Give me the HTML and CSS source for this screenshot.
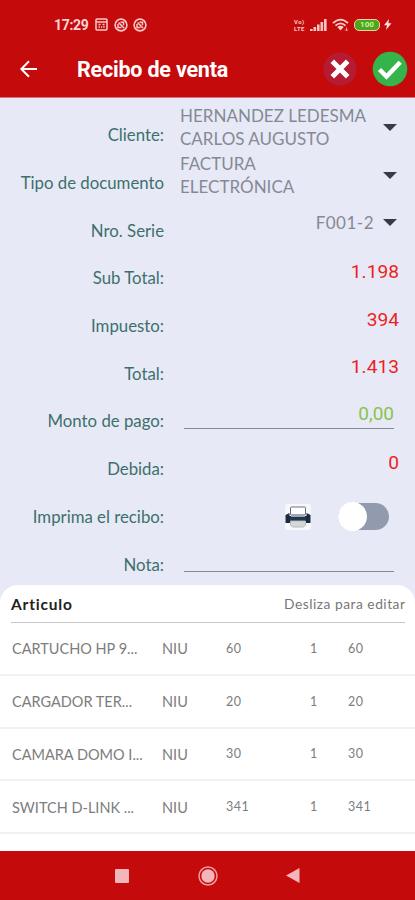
FILE: index.html
```html
<!DOCTYPE html>
<html lang="es">
<head>
<meta charset="UTF-8">
<meta name="viewport" content="width=device-width, initial-scale=1.0">
<title>Recibo de venta</title>
<link rel="stylesheet" href="styles.css">
</head>
<body>
<div class="app">
    <header class="cabecera">
        <div class="estado">
            <span class="hora">17:29</span>
            <svg class="ico-calendario" width="13" height="13" viewBox="0 0 13 13"><rect x="1" y="1" width="11" height="11" rx="1" fill="none" stroke="#f9c9c9" stroke-width="1.5"/><path d="M1 4h11M3.500 6.500h2M7.500 6.500h2M3.500 9h1.500M6 9h1.200M8.200 9h1.500" stroke="#f9c9c9" stroke-width="1.300"/></svg>
            <svg class="ico-aviso" width="14" height="14" viewBox="0 0 14 14"><circle cx="7" cy="7" r="5.900" fill="none" stroke="#f9c9c9" stroke-width="1.600"/><path d="M4.500 4.500l5.500 5.500M4 6v3.500h3.500M6.500 4.200h3v3" fill="none" stroke="#f9c9c9" stroke-width="1.500"/></svg>
            <svg class="ico-aviso" width="14" height="14" viewBox="0 0 14 14"><circle cx="7" cy="7" r="5.900" fill="none" stroke="#f9c9c9" stroke-width="1.600"/><path d="M4.500 4.500l5.500 5.500M4 6v3.500h3.500M6.500 4.200h3v3" fill="none" stroke="#f9c9c9" stroke-width="1.500"/></svg>
            <span class="lte"><span>Vo)</span><span>LTE</span></span>
            <svg class="ico-senal" width="17" height="12" viewBox="0 0 17 12"><path d="M0 12V10h2.600v2zM3.500 12V8h2.600v4zM7 12V5.500h2.600V12zM10.500 12V3h2.600v9zM14 12V0h2.600v12z" fill="#f8c4c4"/></svg>
            <svg class="ico-wifi" width="18" height="14" viewBox="0 0 18 14"><path d="M1 5.200Q8.500-2 16 5.200M3.500 7.700Q8.500 3 13.500 7.700" fill="none" stroke="#f9cccc" stroke-width="1.800"/><path d="M5.300 8.900Q8.500 6.500 11.700 8.900L8.500 12.500z" fill="#f9cccc"/><path d="M14.500 9.500v3.500M13 11.500l1.500 1.500 1.500-1.500" stroke="#f0a090" fill="none"/></svg>
            <span class="bateria">100</span>
            <svg class="ico-rayo" width="8" height="11" viewBox="0 0 8 11"><path d="M5 0L0 6.300h3L2 11l5.500-6.700H4.400z" fill="#fde0e0"/></svg>
        </div>
        <div class="barra">
            <svg class="volver" width="18" height="18" viewBox="0 0 18 18"><path d="M17 9H2M9 1.200L1.300 9 9 16.800" fill="none" stroke="#fff" stroke-width="2"/></svg>
            <h1 class="titulo">Recibo de venta</h1>
            <svg class="cancelar" width="34" height="34" viewBox="0 0 34 34"><circle cx="17" cy="17" r="16.500" fill="#b61b34"/><path d="M9.300 9.300l15.400 15.400M24.700 9.300L9.300 24.700" stroke="#fff" stroke-width="5"/></svg>
            <svg class="aceptar" width="36" height="36" viewBox="0 0 36 36"><circle cx="18" cy="18" r="17.300" fill="#34b44a"/><path d="M7.500 18.500l7 7L28.200 11.300" fill="none" stroke="#fff" stroke-width="4.500"/></svg>
        </div>
    </header>

    <main class="formulario">
        <div class="fila">
            <label class="etiqueta">Cliente:</label>
            <div class="selector"><span class="opcion">HERNANDEZ LEDESMA<br>CARLOS AUGUSTO</span><span class="flecha"></span></div>
        </div>
        <div class="fila">
            <label class="etiqueta">Tipo de documento</label>
            <div class="selector"><span class="opcion">FACTURA<br>ELECTRÓNICA</span><span class="flecha"></span></div>
        </div>
        <div class="fila">
            <label class="etiqueta">Nro. Serie</label>
            <div class="selector serie"><span class="opcion">F001-2</span><span class="flecha"></span></div>
        </div>
        <div class="fila">
            <label class="etiqueta">Sub Total:</label>
            <div class="importe">1.198</div>
        </div>
        <div class="fila">
            <label class="etiqueta">Impuesto:</label>
            <div class="importe">394</div>
        </div>
        <div class="fila">
            <label class="etiqueta">Total:</label>
            <div class="importe">1.413</div>
        </div>
        <div class="fila">
            <label class="etiqueta">Monto de pago:</label>
            <div class="campo">0,00</div>
        </div>
        <div class="fila">
            <label class="etiqueta">Debida:</label>
            <div class="importe">0</div>
        </div>
        <div class="fila">
            <label class="etiqueta">Imprima el recibo:</label>
            <div class="imprimir">
                <svg class="impresora" width="28" height="28" viewBox="0 0 28 28"><rect x="1" y="1" width="26" height="26" rx="3" fill="#f7f8fc"/><path d="M1.500 12l4-2v3h17v-3l4 2v8h-5v-2h-15v2h-5z" fill="#1d2b42"/><rect x="6.500" y="4" width="15" height="8" rx="1" fill="#fff" stroke="#6b747e"/><path d="M7 11h14v3H7z" fill="#9da7b5"/><path d="M6 14.500h16V17H6z" fill="#26384f"/><path d="M6.500 18h15v4l-2 2h-11l-2-2z" fill="#d5d8d9" stroke="#b5bcbf"/></svg>
                <span class="interruptor"></span>
            </div>
        </div>
        <div class="fila">
            <label class="etiqueta">Nota:</label>
            <div class="campo"></div>
        </div>
    </main>

    <section class="articulos">
        <div class="articulos-cabecera">
            <span class="articulos-titulo">Articulo</span>
            <span class="articulos-ayuda">Desliza para editar</span>
        </div>
        <div class="articulo"><span class="nombre">CARTUCHO HP 9...</span><span class="unidad">NIU</span><span>60</span><span>1</span><span>60</span></div>
        <div class="articulo"><span class="nombre">CARGADOR TER...</span><span class="unidad">NIU</span><span>20</span><span>1</span><span>20</span></div>
        <div class="articulo"><span class="nombre">CAMARA DOMO I...</span><span class="unidad">NIU</span><span>30</span><span>1</span><span>30</span></div>
        <div class="articulo"><span class="nombre">SWITCH D-LINK ...</span><span class="unidad">NIU</span><span>341</span><span>1</span><span>341</span></div>
    </section>

    <nav class="navegacion">
        <svg width="14" height="14" viewBox="0 0 14 14"><rect width="14" height="14" rx="1" fill="#f4b6bb"/></svg>
        <svg width="20" height="20" viewBox="0 0 20 20"><circle cx="10" cy="10" r="9" fill="none" stroke="#ee9da2" stroke-width="1.500"/><circle cx="10" cy="10" r="6.700" fill="#f4b6bb"/></svg>
        <svg width="14" height="15" viewBox="0 0 14 15"><path d="M13.500 0v15L0 7.500z" fill="#f4b6bb"/></svg>
    </nav>
</div>
</body>
</html>
```
FILE: styles.css
```css
* {
    box-sizing: border-box;
}

body {
    margin: 0;
    font-family: Lato, "Open Sans", sans-serif;
}

.app {
    width: 415px;
    height: 900px;
    display: flex;
    flex-direction: column;
    background-color: #e7eaf6;
    overflow: hidden;
}

/* Cabecera */
.cabecera {
    height: 98px;
    flex: none;
    background-color: #c50a0b;
    border-bottom: 1px solid #dc727a;
    color: #fff;
}

.estado {
    display: flex;
    align-items: center;
    height: 49px;
    padding-left: 54px;
}

.hora {
    width: 41px;
    font: bold 14px Roboto, sans-serif;
    letter-spacing: -0.3px;
    color: #fbd5d5;
}

.ico-aviso {
    margin-left: 5px;
}

.ico-calendario + .ico-aviso {
    margin-left: 6px;
}

.lte {
    display: flex;
    flex-direction: column;
    width: 16px;
    margin-left: 147px;
    font: bold 6px/7px Roboto, sans-serif;
    letter-spacing: 0.4px;
    color: #f9caca;
}

.ico-wifi {
    margin-left: 5px;
}

.bateria {
    width: 26px;
    height: 12px;
    margin-left: 4px;
    border: 1.5px solid #f5c5b5;
    border-radius: 5px;
    background-color: #4da817;
    font: bold 8px/9px Roboto, sans-serif;
    text-align: center;
    color: #c7f0a5;
}

.ico-rayo {
    margin-left: 4px;
}

.barra {
    display: flex;
    align-items: center;
    height: 40px;
    padding: 0 7px 0 20px;
}

.titulo {
    margin: 1px 0 0 39px;
    font: bold 21.5px Roboto, sans-serif;
    white-space: nowrap;
    letter-spacing: -0.2px;
}

.cancelar {
    margin-left: auto;
}

.aceptar {
    margin-left: 15px;
}

/* Formulario */
.formulario {
    height: 487px;
    flex: none;
    padding-top: 5px;
}

.fila {
    display: grid;
    grid-template-columns: 164px 1fr;
    height: 47.7px;
    align-items: center;
}

.etiqueta {
    padding-top: 16px;
    text-align: right;
    font-size: 16.8px;
    white-space: nowrap;
    color: #3d706c;
}

.selector {
    display: flex;
    align-items: center;
    justify-content: space-between;
    padding: 1px 18px 0 16px;
    font-size: 17px;
    line-height: 23px;
    color: #858995;
}

.serie {
    justify-content: flex-end;
    gap: 9px;
}

.serie .opcion {
    letter-spacing: 0.5px;
}

.flecha {
    border: 7px solid transparent;
    border-top-color: #353b48;
    border-bottom: 0;
}

.importe {
    padding: 3px 16px 0 0;
    text-align: right;
    font: 19.2px Roboto, sans-serif;
    color: #ed1f24;
}

.campo {
    height: 32px;
    margin: 0 21px 0 20px;
    border-bottom: 1.5px solid #85899a;
    text-align: right;
    font: 19px/34px Roboto, sans-serif;
    color: #8bc34a;
}

.imprimir {
    display: flex;
    align-items: center;
    padding: 17px 26px 0 120px;
    justify-content: space-between;
}

.interruptor {
    width: 51px;
    height: 27px;
    border-radius: 14px;
    background-color: #929bad;
}

.interruptor::before {
    content: "";
    display: block;
    width: 29px;
    height: 29px;
    margin-top: -1px;
    border-radius: 50%;
    background-color: #fff;
}

/* Lista de articulos */
.articulos {
    flex: 1;
    border-radius: 18px 18px 0 0;
    background-color: #fff;
}

.articulos-cabecera {
    display: flex;
    align-items: center;
    justify-content: space-between;
    height: 38px;
    margin: 0 10px 0 11px;
    border-bottom: 1.5px solid #c8c8c8;
}

.articulos-titulo {
    font-size: 15.5px;
    font-weight: bold;
    letter-spacing: 0.8px;
    color: #222;
}

.articulos-ayuda {
    font-size: 13.8px;
    letter-spacing: 0.5px;
    margin-right: -0.5px;
    color: #777;
}

.articulo {
    display: grid;
    grid-template-columns: 150px 64px 84px 38px 1fr;
    align-items: center;
    height: 52.8px;
    padding-left: 12px;
    border-bottom: 2px solid #f1f1f1;
    font-size: 12.5px;
    letter-spacing: 0.5px;
    color: #7d7d7d;
}

.nombre,
.unidad {
    padding-top: 1px;
    font-size: 14.5px;
    letter-spacing: 0;
}

/* Barra inferior */
.navegacion {
    display: flex;
    flex: none;
    align-items: center;
    justify-content: space-between;
    height: 49px;
    padding: 0 115px 0 115px;
    background-color: #c50a0b;
}
```
